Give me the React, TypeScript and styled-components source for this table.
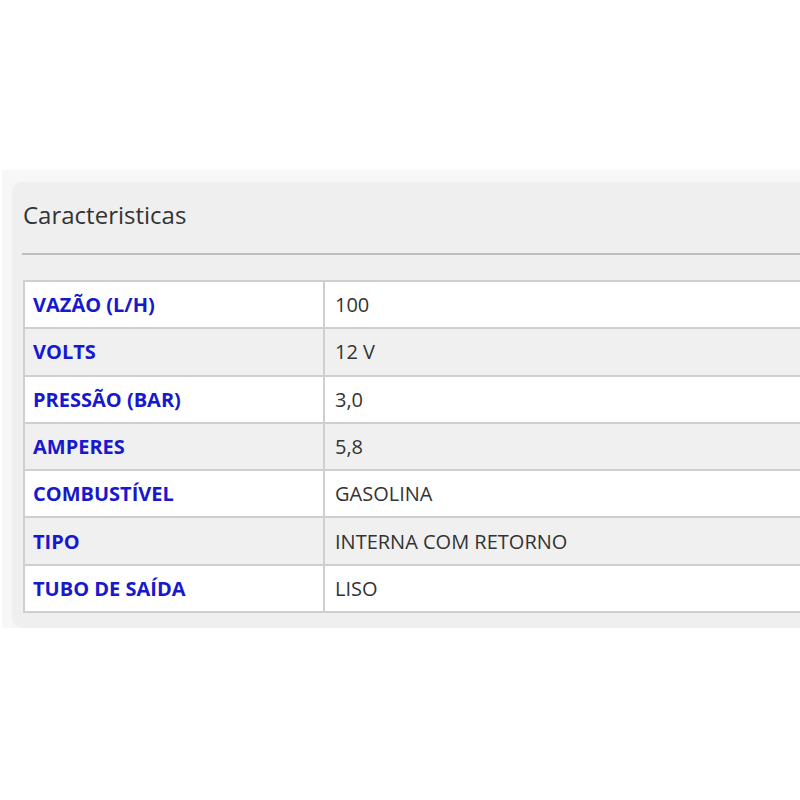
import React from "react";
import styled, { createGlobalStyle } from "styled-components";

const GlobalStyle = createGlobalStyle`
  html, body {
    margin: 0;
    padding: 0;
    background: #fff;
    overflow: hidden;
  }
  body {
    font-family: "Open Sans", "Noto Sans", sans-serif;
  }
`;

const Page = styled.div`
  width: 800px;
  height: 800px;
  padding-top: 170px;
  box-sizing: border-box;
  overflow: hidden;
`;

const Outer = styled.div`
  background: #f7f7f7;
  margin-left: 2px;
  padding: 12px 0 0 10px;
`;

const Panel = styled.div`
  background: #efefef;
  border-radius: 10px 0 0 10px;
  padding: 0 0 15px 10px;
  width: 900px;
`;

const Heading = styled.h3`
  margin: 0;
  font-size: 24px;
  font-weight: 400;
  color: #333;
  height: 71px;
  line-height: 66px;
  padding-left: 1px;
  border-bottom: 2px solid #bdbdbd;
`;

const Table = styled.table`
  margin-top: 25px;
  margin-left: 1px;
  border-collapse: collapse;
  width: 880px;
  border: 2px solid #cfcfcf;
`;

const Row = styled.tr<{ $shade: boolean }>`
  background: ${({ $shade }) => ($shade ? "#f0f0f0" : "#fff")};
`;

const Cell = styled.td<{ $label?: boolean }>`
  border: 2px solid #cfcfcf;
  height: 45.3px;
  padding: 0 10px 0 ${({ $label }) => ($label ? "8px" : "10px")};
  font-size: 20px;
  color: ${({ $label }) => ($label ? "#1818cc" : "#333")};
  font-weight: ${({ $label }) => ($label ? 700 : 400)};
  width: ${({ $label }) => ($label ? "280px" : "auto")};
  white-space: nowrap;
`;

const rows: [string, string][] = [
  ["VAZÃO (L/H)", "100"],
  ["VOLTS", "12 V"],
  ["PRESSÃO (BAR)", "3,0"],
  ["AMPERES", "5,8"],
  ["COMBUSTÍVEL", "GASOLINA"],
  ["TIPO", "INTERNA COM RETORNO"],
  ["TUBO DE SAÍDA", "LISO"],
];

const App: React.FC = () => (
  <Page>
    <GlobalStyle />
    <Outer>
      <Panel>
        <Heading>Caracteristicas</Heading>
        <Table>
          <tbody>
            {rows.map(([k, v], i) => (
              <Row key={k} $shade={i % 2 === 1}>
                <Cell $label>{k}</Cell>
                <Cell>{v}</Cell>
              </Row>
            ))}
          </tbody>
        </Table>
      </Panel>
    </Outer>
  </Page>
);

export default App;
